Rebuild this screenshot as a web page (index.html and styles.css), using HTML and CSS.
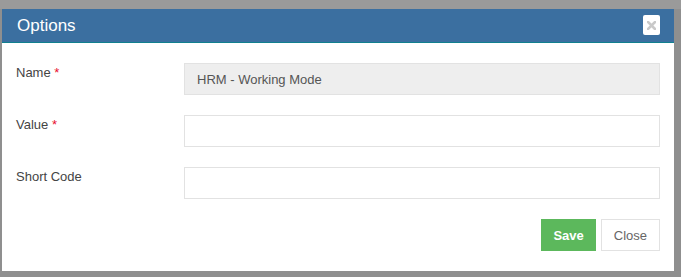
FILE: index.html
```html
<html>
<head>
    <title>Options</title>

    <link rel="stylesheet" href="styles.css">

</head>

<body>

    <div id="modal">
        <div id="header">
            <p id="title">Options</p>
            <button id="closex" type="button">
                <svg width="9" height="9" viewBox="0 0 9 9">
                    <path d="M1 1 L8 8 M8 1 L1 8" stroke="#c9c9c9" stroke-width="2.6" stroke-linecap="square"></path>
                </svg>
            </button>
        </div>
        <div id="body">
            <div class="row">
                <label for="name">Name <span class="req">*</span></label>
                <input id="name" type="text" value="HRM - Working Mode" disabled>
            </div>
            <div class="row">
                <label for="value">Value <span class="req">*</span></label>
                <input id="value" type="text" autocomplete="off">
            </div>
            <div class="row">
                <label for="code">Short Code</label>
                <input id="code" type="text" autocomplete="off">
            </div>
        </div>
        <div id="footer">
            <button id="save" type="button">Save</button>
            <button id="close" type="button">Close</button>
        </div>
    </div>

</body>
</html>
```

FILE: styles.css
```css
        body {
            margin: 0;
            padding: 9px 0 0 2px;
            background: linear-gradient(#9a9a9a 0, #9a9a9a 9px, #8f8f8f 9px);
            font-family: "Liberation Sans", Arial, sans-serif;
            font-size: 13px;
            height: 277px;
            box-sizing: border-box;
        }

        #modal {
            width: 672px;
            background-color: #fff;
        }

        #header {
            height: 33px;
            background-color: #3b6fa0;
            border-bottom: 1px solid #11808f;
            display: flex;
            align-items: center;
            justify-content: space-between;
            padding: 0 14px 0 15px;
        }

        #title {
            margin: 0;
            color: #fff;
            font-size: 17px;
            line-height: 20px;
        }

        #closex {
            width: 17px;
            height: 20px;
            padding: 0;
            border: none;
            border-radius: 2px;
            background-color: #fff;
            display: flex;
            align-items: center;
            justify-content: center;
            margin-top: -1px;
        }

        #body {
            padding: 20px 14px 0 14px;
            display: flex;
            flex-direction: column;
            gap: 20px;
        }

            .row {
                display: flex;
                align-items: flex-start;
            }

            .row label {
                width: 168px;
                color: #444;
                line-height: 13px;
                padding-top: 3px;
            }

            .req {
                color: #e8112d;
            }

            .row input {
                flex: 1;
                height: 32px;
                box-sizing: border-box;
                border: 1px solid #e2e2e2;
                padding: 0 12px;
                margin: 0;
                font-family: "Liberation Sans", Arial, sans-serif;
                font-size: 13px;
                color: #555;
                background-color: #fff;
                outline: none;
            }

            .row input:disabled {
                background-color: #eee;
                color: #555;
            }

        #footer {
            display: flex;
            justify-content: flex-end;
            gap: 5px;
            padding: 20px 14px 20px 14px;
        }

            #footer button {
                height: 32px;
                padding: 0 12px;
                font-family: "Liberation Sans", Arial, sans-serif;
                font-size: 13px;
                border: 1px solid #e2e2e2;
                background-color: #fff;
                color: #666;
            }

            #footer #save {
                padding: 0 11px;
                background-color: #5cb85c;
                border-color: #5cb85c;
                color: #fff;
                font-weight: bold;
            }
```
